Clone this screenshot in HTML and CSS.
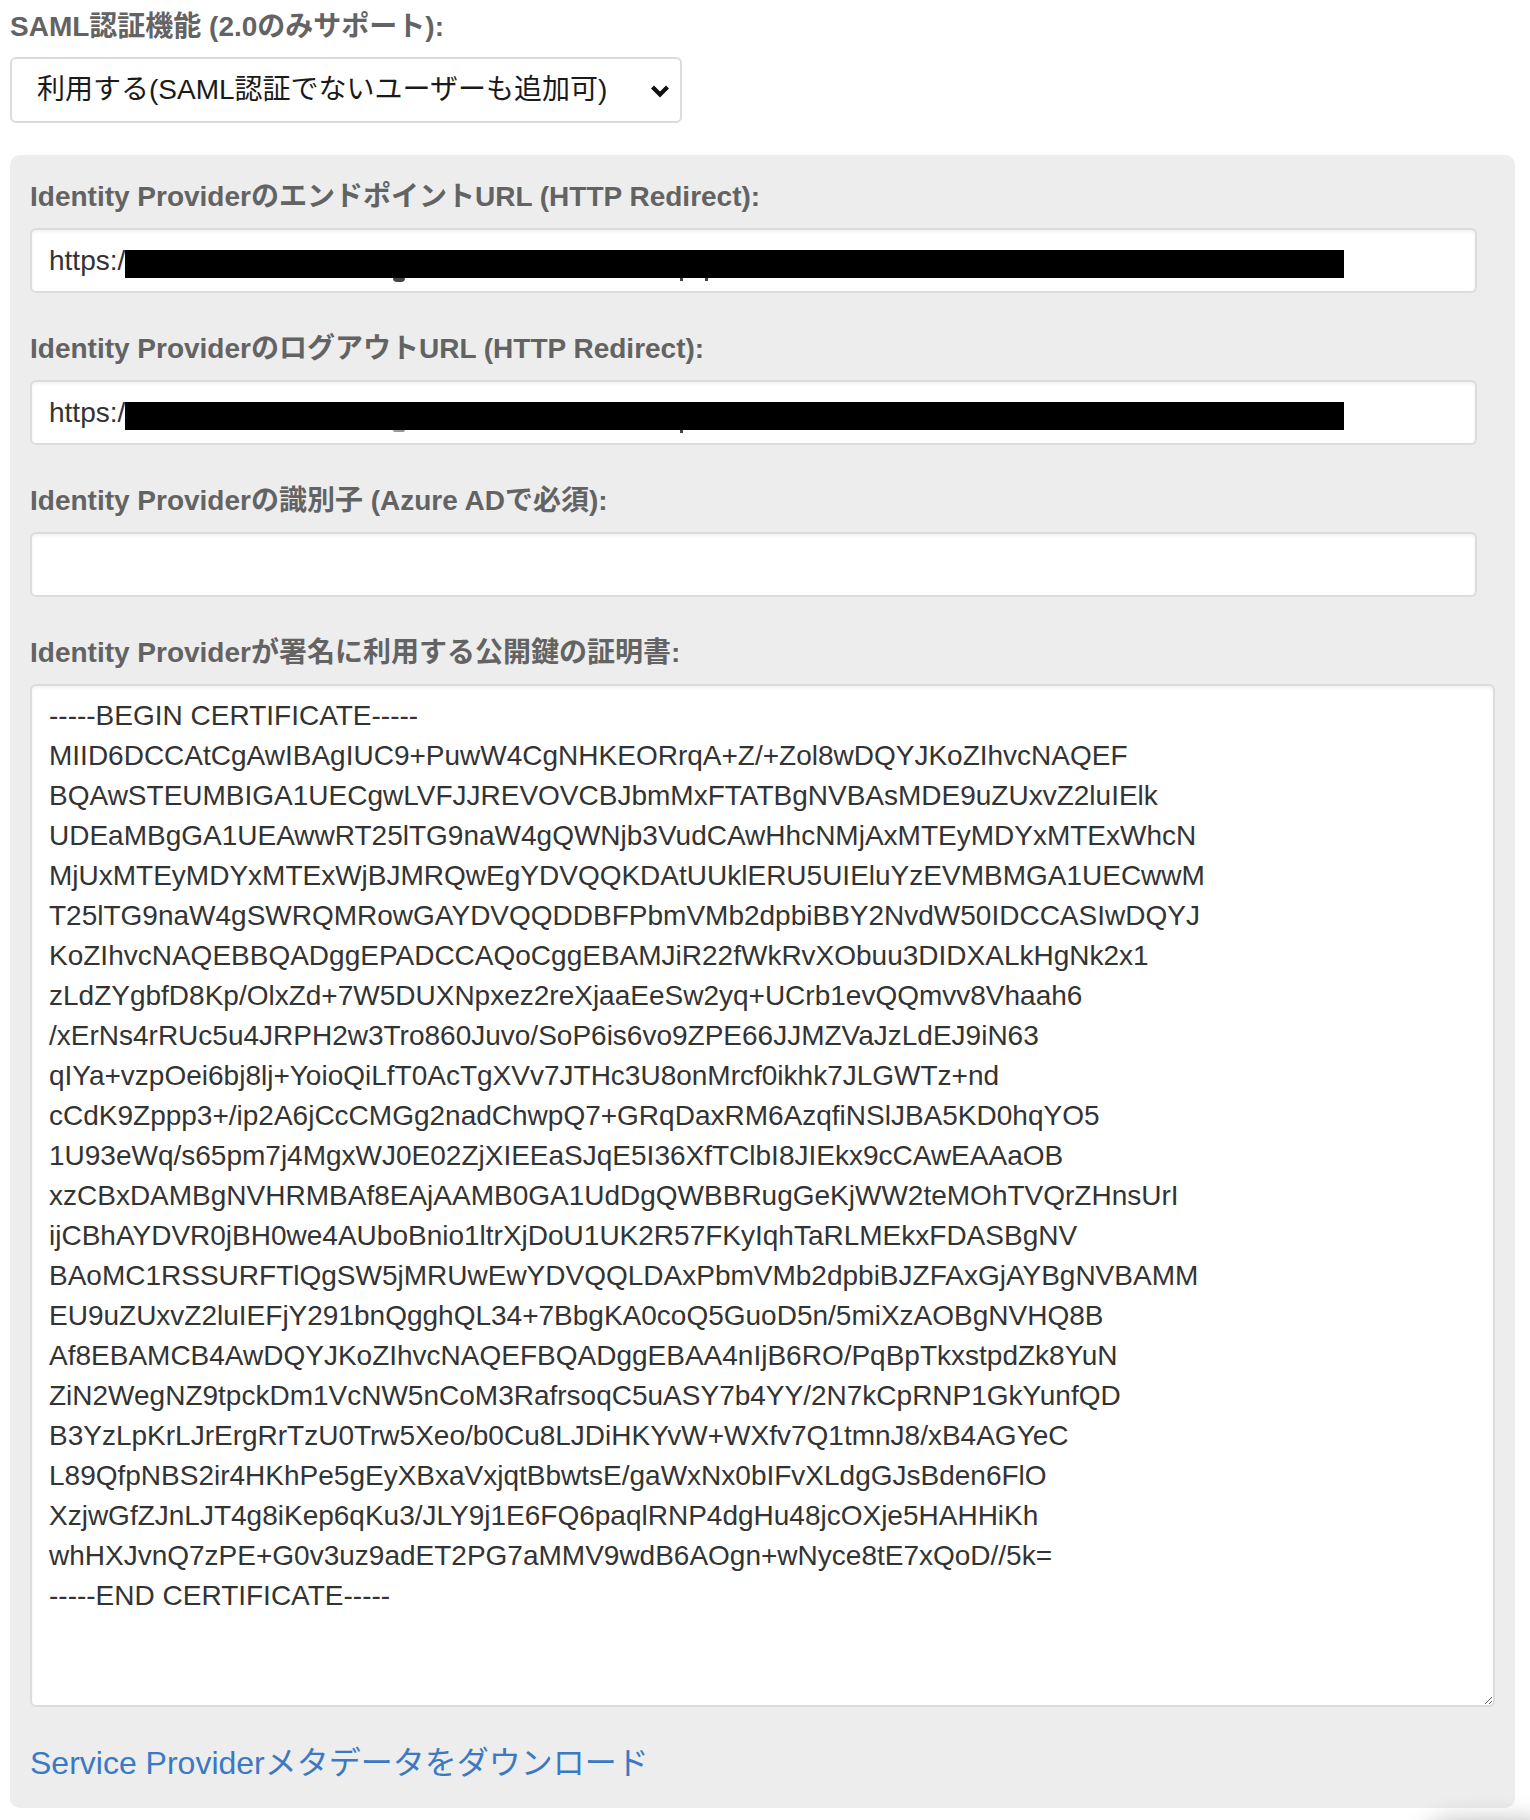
FILE: index.html
```html
<!doctype html>
<html>
  <head>
    <meta charset="utf-8">
    <title>SAML認証設定</title>
    <link rel="stylesheet" href="styles.css">
  </head>
  <body>
    <div class="page">
      <div class="form-group">
        <label class="control-label">SAML認証機能 (2.0のみサポート):</label>
        <div class="select-box">
          <span>利用する(SAML認証でないユーザーも追加可)</span>
          <svg class="chevron" width="20" height="14" viewBox="0 0 20 14">
            <path d="M2.5 3 L10 10.5 L17.5 3" fill="none" stroke="#111" stroke-width="4.2"/>
          </svg>
        </div>
      </div>

      <div class="well">
        <div class="field">
          <label class="control-label">Identity ProviderのエンドポイントURL (HTTP Redirect):</label>
          <div class="field-input">
            https:/<span class="redact"><i class="tail tail-g"></i><i class="tail tail-a"></i><i class="tail tail-b"></i></span>
          </div>
        </div>
        <div class="field">
          <label class="control-label">Identity ProviderのログアウトURL (HTTP Redirect):</label>
          <div class="field-input">
            https:/<span class="redact"><i class="tail tail-g faint"></i><i class="tail tail-a"></i></span>
          </div>
        </div>
        <div class="field">
          <label class="control-label">Identity Providerの識別子 (Azure ADで必須):</label>
          <input class="field-input" type="text">
        </div>
        <div class="field field-last">
          <label class="control-label">Identity Providerが署名に利用する公開鍵の証明書:</label>
          <textarea class="cert" spellcheck="false">-----BEGIN CERTIFICATE-----
MIID6DCCAtCgAwIBAgIUC9+PuwW4CgNHKEORrqA+Z/+Zol8wDQYJKoZIhvcNAQEF
BQAwSTEUMBIGA1UECgwLVFJJREVOVCBJbmMxFTATBgNVBAsMDE9uZUxvZ2luIElk
UDEaMBgGA1UEAwwRT25lTG9naW4gQWNjb3VudCAwHhcNMjAxMTEyMDYxMTExWhcN
MjUxMTEyMDYxMTExWjBJMRQwEgYDVQQKDAtUUklERU5UIEluYzEVMBMGA1UECwwM
T25lTG9naW4gSWRQMRowGAYDVQQDDBFPbmVMb2dpbiBBY2NvdW50IDCCASIwDQYJ
KoZIhvcNAQEBBQADggEPADCCAQoCggEBAMJiR22fWkRvXObuu3DIDXALkHgNk2x1
zLdZYgbfD8Kp/OlxZd+7W5DUXNpxez2reXjaaEeSw2yq+UCrb1evQQmvv8Vhaah6
/xErNs4rRUc5u4JRPH2w3Tro860Juvo/SoP6is6vo9ZPE66JJMZVaJzLdEJ9iN63
qIYa+vzpOei6bj8lj+YoioQiLfT0AcTgXVv7JTHc3U8onMrcf0ikhk7JLGWTz+nd
cCdK9Zppp3+/ip2A6jCcCMGg2nadChwpQ7+GRqDaxRM6AzqfiNSlJBA5KD0hqYO5
1U93eWq/s65pm7j4MgxWJ0E02ZjXIEEaSJqE5I36XfTClbI8JIEkx9cCAwEAAaOB
xzCBxDAMBgNVHRMBAf8EAjAAMB0GA1UdDgQWBBRugGeKjWW2teMOhTVQrZHnsUrI
ijCBhAYDVR0jBH0we4AUboBnio1ltrXjDoU1UK2R57FKyIqhTaRLMEkxFDASBgNV
BAoMC1RSSURFTlQgSW5jMRUwEwYDVQQLDAxPbmVMb2dpbiBJZFAxGjAYBgNVBAMM
EU9uZUxvZ2luIEFjY291bnQgghQL34+7BbgKA0coQ5GuoD5n/5miXzAOBgNVHQ8B
Af8EBAMCB4AwDQYJKoZIhvcNAQEFBQADggEBAA4nIjB6RO/PqBpTkxstpdZk8YuN
ZiN2WegNZ9tpckDm1VcNW5nCoM3RafrsoqC5uASY7b4YY/2N7kCpRNP1GkYunfQD
B3YzLpKrLJrErgRrTzU0Trw5Xeo/b0Cu8LJDiHKYvW+WXfv7Q1tmnJ8/xB4AGYeC
L89QfpNBS2ir4HKhPe5gEyXBxaVxjqtBbwtsE/gaWxNx0bIFvXLdgGJsBden6FlO
XzjwGfZJnLJT4g8iKep6qKu3/JLY9j1E6FQ6paqlRNP4dgHu48jcOXje5HAHHiKh
whHXJvnQ7zPE+G0v3uz9adET2PG7aMMV9wdB6AOgn+wNyce8tE7xQoD//5k=
-----END CERTIFICATE-----</textarea>
        </div>
        <a class="metadata-link" href="#">Service Providerメタデータをダウンロード</a>
      </div>
    </div>
    <div class="floating-shadow"></div>
  </body>
</html>
```

FILE: styles.css
```css
html,
body {
  margin: 0;
  background: #fff;
  overflow: hidden;
}

body {
  font-family: "Liberation Sans", "Noto Sans CJK JP", sans-serif;
  font-size: 28px;
  line-height: 40px;
  color: #333;
}

.page {
  padding: 7px 15px 0 10px;
}

.control-label {
  display: block;
  font-weight: bold;
  color: #636363;
  line-height: 40px;
}

/* top select */
.form-group {
  margin-bottom: 32px;
}
.form-group .control-label {
  margin-bottom: 10px;
}
.select-box {
  width: 672px;
  height: 66px;
  box-sizing: border-box;
  display: flex;
  align-items: center;
  justify-content: space-between;
  padding: 0 10px 0 25px;
  background: #fff;
  border: 2px solid #dcdcdc;
  border-radius: 6px;
  color: #1a1a1a;
}
.chevron {
  margin-top: 2px;
}

/* gray box */
.well {
  background: #ededed;
  border-radius: 10px;
  padding: 22px 20px 22px 20px;
}

.field {
  margin-bottom: 36px;
}
.field .control-label {
  margin-bottom: 11px;
}
.field-last {
  margin-bottom: 33px;
}

.field-input {
  display: flex;
  align-items: center;
  width: 1447px;
  height: 65px;
  box-sizing: border-box;
  margin: 0;
  padding: 0 17px;
  background: #fff;
  border: 2px solid #dcdcdc;
  border-radius: 6px;
  box-shadow: inset 0 2px 3px rgba(0, 0, 0, 0.06);
  font: inherit;
  color: #333;
  outline: none;
}

.redact {
  position: relative;
  display: inline-block;
  width: 1219px;
  height: 28px;
  margin-top: 6px;
  background: #000;
}
/* bits of glyph descenders peeking out below the black bar */
.tail {
  position: absolute;
  top: 28px;
  height: 5px;
  background: #444;
}
.tail-g {
  left: 268px;
  width: 12px;
  height: 4px;
  border-radius: 0 0 6px 6px;
}
.tail-a {
  left: 555px;
  width: 3px;
  height: 3px;
}
.tail-b {
  left: 580px;
  width: 3px;
  height: 3px;
}
.faint {
  background: #999;
  height: 2px;
}

.cert {
  display: block;
  width: 100%;
  height: 1023px;
  box-sizing: border-box;
  margin: 0;
  padding: 10px 17px;
  background: #fff;
  border: 2px solid #dcdcdc;
  border-radius: 6px;
  box-shadow: inset 0 2px 3px rgba(0, 0, 0, 0.06);
  font: inherit;
  color: #333;
  resize: vertical;
  outline: none;
  overflow: hidden;
}

.metadata-link {
  display: inline-block;
  font-size: 32px;
  line-height: 46px;
  color: #3b79c3;
  text-decoration: none;
}

.floating-shadow {
  position: fixed;
  right: -30px;
  bottom: -70px;
  width: 140px;
  height: 70px;
  border-radius: 35px;
  background: #fff;
  box-shadow: 0 0 24px rgba(0, 0, 0, 0.25);
}
```
